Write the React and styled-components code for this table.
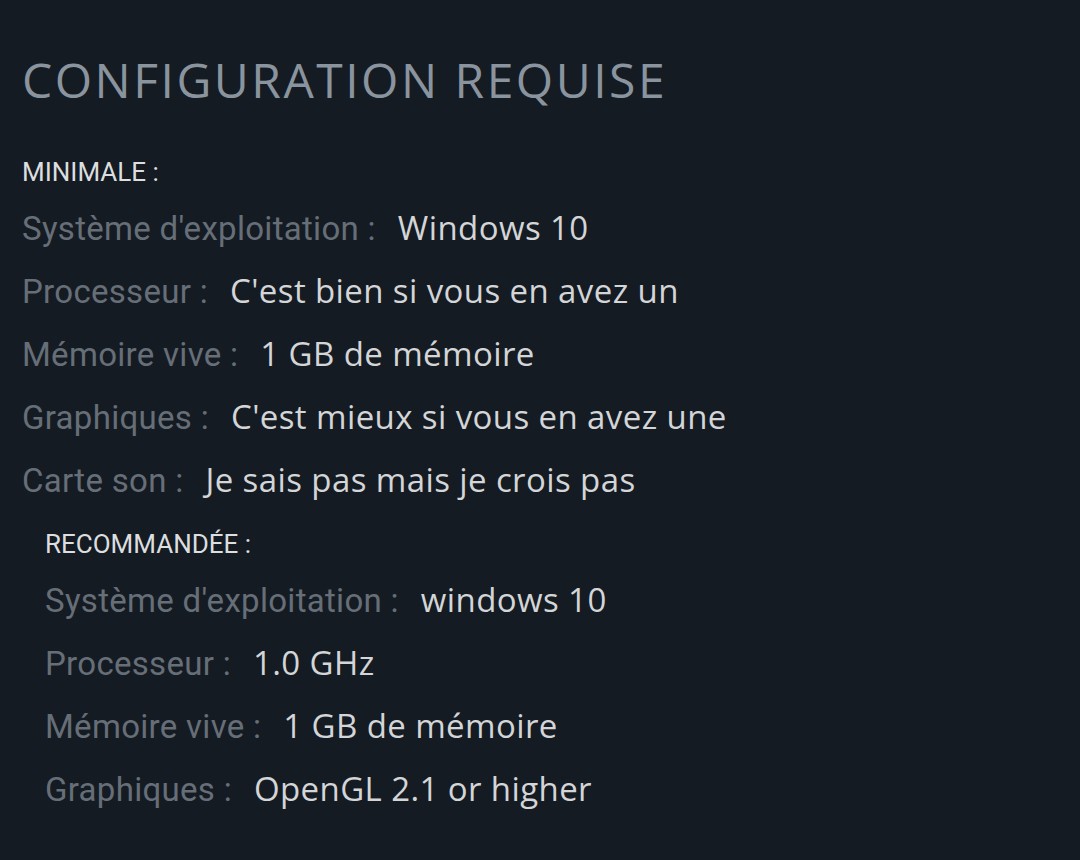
import styled, { createGlobalStyle } from "styled-components";

const GlobalStyle = createGlobalStyle`
  html, body {
    margin: 0;
    padding: 0;
    background: #151b23;
  }
  body {
    font-family: "Open Sans", "Noto Sans", sans-serif;
  }
`;

const minimum = [
  ["Système d'exploitation :", "Windows 10"],
  ["Processeur :", "C'est bien si vous en avez un"],
  ["Mémoire vive :", "1 GB de mémoire"],
  ["Graphiques :", "C'est mieux si vous en avez une"],
  ["Carte son :", "Je sais pas mais je crois pas"],
];

const recommended = [
  ["Système d'exploitation :", "windows 10"],
  ["Processeur :", "1.0 GHz"],
  ["Mémoire vive :", "1 GB de mémoire"],
  ["Graphiques :", "OpenGL 2.1 or higher"],
];

const App = () => {
  return (
    <Page>
      <GlobalStyle />
      <Title>Configuration requise</Title>
      <Requirements title="MINIMALE :" items={minimum} />
      <Requirements title="RECOMMANDÉE :" items={recommended} indent />
    </Page>
  );
};

const Requirements = ({ title, items, indent }) => (
  <Section $indent={indent}>
    <SectionTitle>{title}</SectionTitle>
    <List>
      {items.map(([label, value], i) => (
        <Row key={i}>
          <Label>{label}</Label>
          <Value>{value}</Value>
        </Row>
      ))}
    </List>
  </Section>
);

const Page = styled.div`
  min-height: 860px;
  box-sizing: border-box;
  padding: 52px 22px 40px 22px;
  background: #151b23;
`;

const Title = styled.h2`
  margin: 0 0 49px 0;
  font-family: "Open Sans", "Noto Sans", sans-serif;
  font-weight: 400;
  font-size: 48px;
  line-height: 56px;
  letter-spacing: 2.5px;
  text-transform: uppercase;
  color: #8a949e;
`;

const Section = styled.div`
  padding-left: ${(p) => (p.$indent ? "23px" : "0")};
  margin-bottom: 29px;
`;

const SectionTitle = styled.div`
  font-family: Roboto, sans-serif;
  font-size: 26px;
  line-height: 30px;
  color: #dcdedf;
  margin-bottom: 22px;
`;

const List = styled.div`
  display: flex;
  flex-direction: column;
  gap: 24px;
`;

const Row = styled.div`
  display: flex;
  align-items: baseline;
  gap: 22px;
  line-height: 38px;
`;

const Label = styled.span`
  font-family: Roboto, sans-serif;
  font-size: 33px;
  letter-spacing: 0.3px;
  color: #666e77;
`;

const Value = styled.span`
  font-family: "Open Sans", "Noto Sans", sans-serif;
  font-size: 33px;
  letter-spacing: 0.4px;
  color: #d3d5d7;
`;

export default App;
